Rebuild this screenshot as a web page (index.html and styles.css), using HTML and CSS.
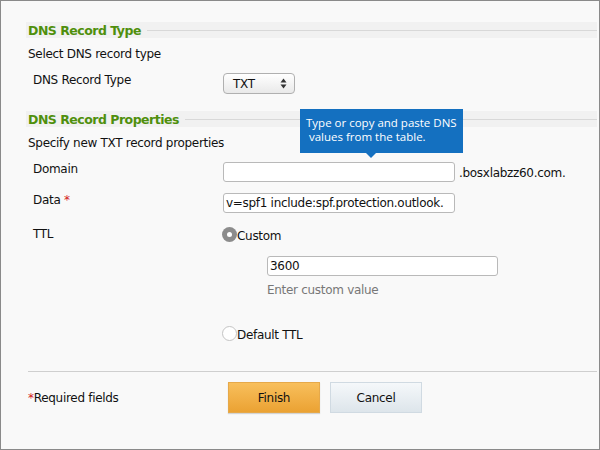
FILE: index.html
```html
<!DOCTYPE html>
<html>
<head>
<meta charset="utf-8">
<link rel="stylesheet" href="styles.css">
</head>
<body>
<div class="panel">
  <h2 class="section"><span>DNS Record Type</span></h2>
  <p class="intro">Select DNS record type</p>
  <div class="form-row first">
    <div class="label">DNS Record Type</div>
    <div class="select">
      <span>TXT</span>
      <svg class="arrows" width="7" height="11" viewBox="0 0 7 11"><path d="M3.5 0.5 L6.5 4.5 L0.5 4.5 Z M3.5 10.5 L6.5 6.5 L0.5 6.5 Z" fill="#333"/></svg>
    </div>
  </div>

  <h2 class="section second"><span>DNS Record Properties</span></h2>
  <p class="intro">Specify new TXT record properties</p>

  <div class="form-row">
    <div class="label">Domain</div>
    <div class="control">
      <div class="input wide"></div>
      <span class="suffix">.bosxlabzz60.com.</span>
    </div>
  </div>
  <div class="form-row">
    <div class="label">Data <span class="req">*</span></div>
    <div class="control">
      <div class="input wide"><span class="value">v=spf1 include:spf.protection.outlook.</span></div>
    </div>
  </div>
  <div class="form-row ttl">
    <div class="label">TTL</div>
    <div class="ttl-options">
      <div class="radio-line"><span class="radio checked"></span><span class="rtext">Custom</span></div>
      <div class="custom-box">
        <div class="input mid"><span class="value">3600</span></div>
        <div class="hint">Enter custom value</div>
      </div>
      <div class="radio-line default"><span class="radio"></span><span class="rtext">Default TTL</span></div>
    </div>
  </div>

  <div class="footer">
    <div class="required"><span class="req">*</span>Required fields</div>
    <div class="buttons">
      <button class="btn finish">Finish</button>
      <button class="btn cancel">Cancel</button>
    </div>
  </div>

  <div class="tooltip">Type or copy and paste DNS<br>&nbsp;values from the table.</div>
</div>
</body>
</html>
```
FILE: styles.css
```css
* { box-sizing: border-box; }
html, body { margin: 0; padding: 0; }
body {
  font-family: "DejaVu Sans", Verdana, sans-serif;
  font-size: 12px;
  letter-spacing: -0.3px;
  color: #111;
  background: #f9f9f9;
}
.panel {
  position: relative;
  width: 600px;
  height: 450px;
  border: 1px solid #8a8a8a;
  background: #f9f9f9;
  padding: 21px 2px 0 25px;
}
.section {
  display: flex;
  align-items: center;
  margin: 0;
  height: 16px;
  background: #f1f1f1;
  font-size: 12.5px;
  letter-spacing: -0.5px;
  font-weight: bold;
  color: #4f8f0c;
  padding-left: 2px;
}
.section::after {
  content: "";
  flex: 1;
  height: 1px;
  background: #d8d8d8;
  margin-left: 6px;
}
.section.second { margin-top: 17px; }
.intro {
  margin: 8px 0 0 2px;
  line-height: 16px;
}
.form-row {
  display: grid;
  grid-template-columns: 197px 1fr;
  margin-top: 11px;
}
.form-row.first { margin-top: 11px; }
.label {
  padding-left: 7px;
  line-height: 16px;
  margin-top: -1px;
}
.req { color: #d32020; }
.select {
  width: 72px;
  height: 21px;
  border: 1px solid #b0b0b0;
  border-radius: 4px;
  background: linear-gradient(#ffffff, #e9e9e9);
  display: flex;
  align-items: center;
  justify-content: space-between;
  padding: 0 7px 0 9px;
  font-size: 12px;
}
.control {
  display: flex;
  align-items: center;
  gap: 4px;
}
.input {
  height: 20px;
  border: 1px solid #b9b9b9;
  border-radius: 3px;
  background: #fff;
  overflow: hidden;
  white-space: nowrap;
  padding: 0 2px;
  line-height: 18px;
}
.input.wide { width: 232px; }
.input.mid { width: 231px; }
.suffix { line-height: 16px; margin-top: 1px; }
.form-row.ttl { margin-top: 14px; }
.ttl-options { margin-left: -1px; }
.radio-line {
  display: flex;
  align-items: center;
  height: 15px;
  line-height: 15px;
}
.rtext { padding-top: 3px; }
.radio {
  width: 15px;
  height: 15px;
  border-radius: 50%;
  border: 1px solid #c4c4c4;
  background: #fff;
  margin-right: 0;
  display: inline-flex;
  align-items: center;
  justify-content: center;
}
.radio.checked {
  border: none;
  background: #8c8c8c;
}
.radio.checked::after {
  content: "";
  width: 5px;
  height: 5px;
  border-radius: 50%;
  background: #fff;
}
.custom-box {
  margin: 14px 0 0 45px;
}
.hint {
  color: #777;
  margin-top: 6px;
  line-height: 16px;
}
.radio-line.default { margin-top: 28px; }
.footer {
  margin-top: 30px;
  border-top: 1px solid #cfcfcf;
  margin-left: 2px;
  display: grid;
  grid-template-columns: 200px 1fr;
  align-items: center;
  padding-top: 10px;
}
.buttons { display: flex; gap: 10px; }
.btn {
  width: 92px;
  height: 31px;
  font-family: "DejaVu Sans", Verdana, sans-serif;
  font-size: 12px;
  letter-spacing: -0.3px;
  color: #111;
  border-radius: 0;
  padding: 0;
}
.finish {
  background: linear-gradient(#f8bf5c, #eba233);
  border: 1px solid #e6a94a;
  box-shadow: 0 1px 1px rgba(0,0,0,0.15);
}
.cancel {
  background: linear-gradient(#f5f8fa, #dde5eb);
  border: 1px solid #d0dae2;
}
.tooltip {
  position: absolute;
  left: 299px;
  top: 108px;
  width: 163px;
  height: 44px;
  background: #1470c0;
  color: #fff;
  font-family: "Open Sans", "Noto Sans", sans-serif;
  font-size: 11.5px;
  letter-spacing: 0;
  line-height: 14px;
  padding: 7px 0 0 6px;
}
.tooltip::after {
  content: "";
  position: absolute;
  left: 66px;
  bottom: -5px;
  border-left: 5px solid transparent;
  border-right: 5px solid transparent;
  border-top: 5px solid #1470c0;
}
```
